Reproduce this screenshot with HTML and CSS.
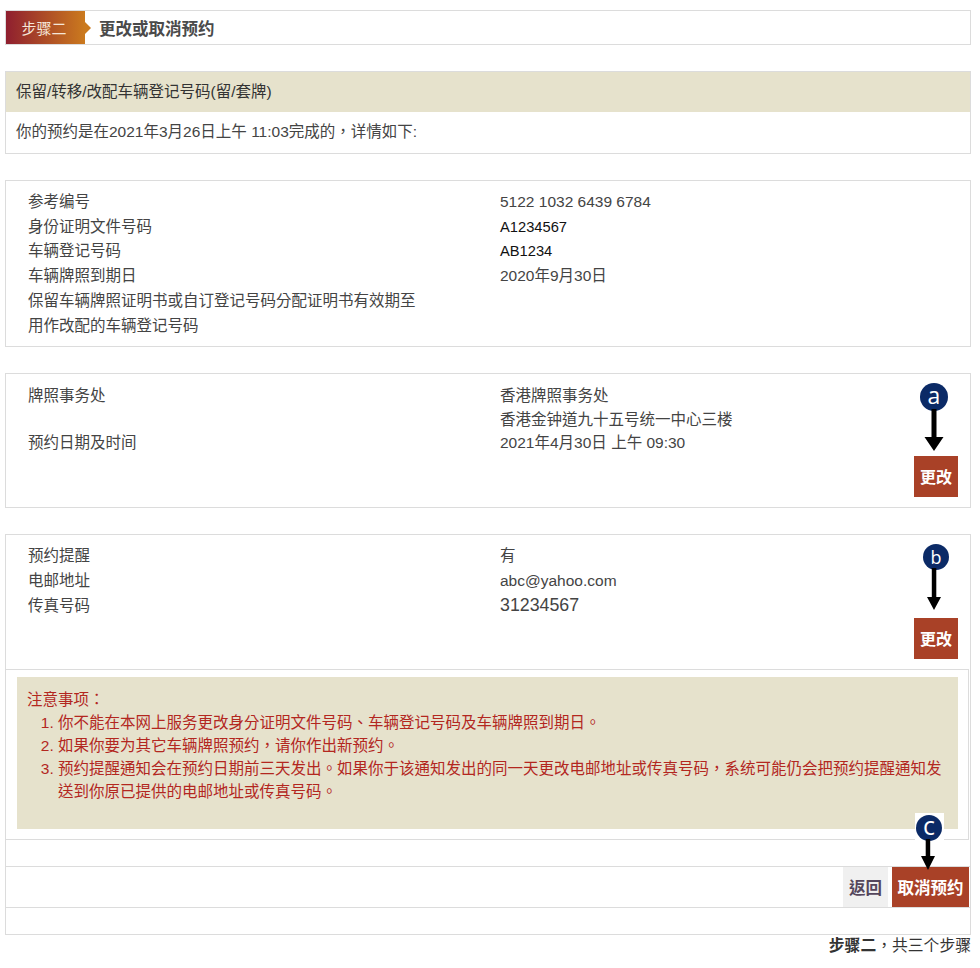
FILE: index.html
```html
<!DOCTYPE html>
<html lang="zh-TW">
<head>
<meta charset="utf-8">
<title>更改或取消预约</title>
<link rel="stylesheet" href="styles.css">
</head>
<body>
<main class="page">
  <header class="step">
    <div class="step-badge">步骤二</div>
    <h1 class="step-title">更改或取消预约</h1>
  </header>

  <section class="card intro">
    <h2 class="intro-head">保留/转移/改配车辆登记号码(留/套牌)</h2>
    <p class="intro-body">你的预约是在2021年3月26日上午 11:03完成的，详情如下:</p>
  </section>

  <section class="card">
    <dl class="info info-ref">
      <dt>参考编号</dt><dd>5122 1032 6439 6784</dd>
      <dt>身份证明文件号码</dt><dd class="strong">A1234567</dd>
      <dt>车辆登记号码</dt><dd class="strong">AB1234</dd>
      <dt>车辆牌照到期日</dt><dd>2020年9月30日</dd>
      <dt>保留车辆牌照证明书或自订登记号码分配证明书有效期至</dt><dd></dd>
      <dt>用作改配的车辆登记号码</dt><dd></dd>
    </dl>
  </section>

  <section class="card annotated">
    <dl class="info info-office">
      <dt>牌照事务处</dt><dd>香港牌照事务处<br>香港金钟道九十五号统一中心三楼</dd>
      <dt>预约日期及时间</dt><dd>2021年4月30日 上午 09:30</dd>
    </dl>
    <div class="change-row change-row-a"><button class="btn btn-change">更改</button></div>
    <svg class="mark mark-a" width="28" height="68" viewBox="0 0 28 68" aria-hidden="true">
      <circle cx="14" cy="14" r="14" fill="#0b2a66"/>
      <text class="mark-letter mark-letter-a" x="14" y="20.500" text-anchor="middle">a</text>
      <path d="M11.500 26h5v28h7L14 68 4.500 54h7z" fill="#000"/>
    </svg>
  </section>

  <section class="card annotated">
    <dl class="info info-contact">
      <dt>预约提醒</dt><dd>有</dd>
      <dt>电邮地址</dt><dd>abc@yahoo.com</dd>
      <dt>传真号码</dt><dd class="fax">31234567</dd>
    </dl>
    <div class="change-row change-row-b"><button class="btn btn-change">更改</button></div>
    <div class="notice-frame">
      <div class="notice">
        <p class="notice-head">注意事项：</p>
        <ol class="notice-list">
          <li>你不能在本网上服务更改身分证明文件号码、车辆登记号码及车辆牌照到期日。</li>
          <li>如果你要为其它车辆牌照预约，请你作出新预约。</li>
          <li>预约提醒通知会在预约日期前三天发出。如果你于该通知发出的同一天更改电邮地址或传真号码，系统可能仍会把预约提醒通知发送到你原已提供的电邮地址或传真号码。</li>
        </ol>
      </div>
    </div>
    <div class="actions">
      <button class="btn btn-back">返回</button>
      <button class="btn btn-cancel">取消预约</button>
    </div>
    <svg class="mark mark-b" width="28" height="66" viewBox="0 0 28 66" aria-hidden="true">
      <circle cx="14" cy="13" r="13" fill="#0b2a66"/>
      <text class="mark-letter mark-letter-b" x="14" y="19.500" text-anchor="middle">b</text>
      <path d="M9.800 24h4.500v29H19L12 66 5 53h4.800z" fill="#000"/>
    </svg>
    <svg class="mark mark-c" width="29" height="57" viewBox="0 0 29 57" aria-hidden="true">
      <rect width="29" height="28" fill="#fff"/>
      <circle cx="14" cy="15" r="13" fill="#0b2a66"/>
      <text class="mark-letter mark-letter-c" x="14" y="22" text-anchor="middle">c</text>
      <path d="M10.700 26h4.500v17H20L13 57 6 43h4.700z" fill="#000"/>
    </svg>
  </section>

  <p class="step-count"><b>步骤二</b>，共三个步骤</p>
</main>
</body>
</html>
```

FILE: styles.css
```css
* { box-sizing: border-box; }

html, body { margin: 0; padding: 0; background: #fff; }

body {
  font-family: "Liberation Sans", "Noto Sans CJK TC", sans-serif;
  font-size: 15.5px;
  color: #444;
}

.page {
  width: 966px;
  margin-left: 5px;
  padding-top: 10px;
}

.step {
  display: flex;
  align-items: stretch;
  height: 35px;
  border: 1px solid #dcdcdc;
}

.step-badge {
  position: relative;
  width: 79px;
  display: flex;
  align-items: center;
  justify-content: center;
  padding-right: 3px;
  background: linear-gradient(90deg, #8f1f2f, #cb7a1e);
  color: #f5e6d8;
  font-size: 15px;
}

.step-badge::after {
  content: "";
  position: absolute;
  left: 100%;
  top: 11px;
  border-left: 6px solid #cb7a1e;
  border-top: 6px solid transparent;
  border-bottom: 6px solid transparent;
}

.step-title {
  margin: 0 0 0 14px;
  align-self: center;
  font-size: 16.500px;
  font-weight: 700;
  color: #4a4a4a;
}

.card {
  margin-top: 26px;
  border: 1px solid #dcdcdc;
}

.annotated { position: relative; }

.intro-head {
  margin: 0;
  height: 40px;
  padding-left: 10px;
  background: #e6e2cc;
  font-size: 15.5px;
  font-weight: 400;
  line-height: 40px;
  color: #333;
}

.intro-body {
  margin: 0;
  height: 41px;
  padding-left: 10px;
  line-height: 40px;
  color: #444;
}

.info {
  display: grid;
  grid-template-columns: 472px 1fr;
  margin: 0;
  padding: 8px 0 0 22px;
}

.info dt, .info dd { margin: 0; }

.info-ref { padding-top: 9px; padding-bottom: 8px; line-height: 24.700px; }
.info-office { line-height: 23.500px; padding-top: 10px; }
.info-contact { line-height: 25px; }

.strong { color: #111; font-size: 14.700px; }
.fax { font-size: 17.800px; }

.change-row {
  display: flex;
  justify-content: flex-end;
  padding-right: 12px;
}

.change-row-a { padding-top: 1px; padding-bottom: 10px; }
.change-row-b { padding-top: 0; padding-bottom: 10px; }

.btn {
  margin: 0;
  padding: 0;
  border: 0;
  font-family: inherit;
  font-size: 16.500px;
  font-weight: 700;
}

.btn-change {
  width: 44px;
  height: 41px;
  background: #a94127;
  color: #fff;
  font-size: 16px;
}

.notice-frame {
  margin-right: 1px;
  padding: 7px 10px 10px 11px;
  border-top: 1px solid #dcdcdc;
  border-right: 1px solid #dcdcdc;
  border-bottom: 1px solid #dcdcdc;
}

.notice {
  height: 152px;
  padding: 11px 10px 0;
  background: #e6e2cc;
  color: #b3271f;
  line-height: 23px;
}

.notice-head { margin: 0; }

.notice-list {
  margin: 0;
  padding: 0 4px 0 31px;
}

.actions {
  display: flex;
  justify-content: flex-end;
  gap: 4px;
  height: 42px;
  margin-top: 26px;
  margin-bottom: 26px;
  padding-right: 1px;
  border-top: 1px solid #dcdcdc;
  border-bottom: 1px solid #dcdcdc;
}

.btn-back {
  width: 45px;
  background: #f0f0f0;
  color: #54465c;
}

.btn-cancel {
  width: 77px;
  background: #a94127;
  color: #fff;
}

.mark { position: absolute; overflow: visible; }
.mark-a { top: 9px; right: 22px; }
.mark-b { top: 9px; right: 20px; }
.mark-c { top: 278px; right: 26px; }

.mark-letter {
  font-family: "Open Sans", sans-serif;
  fill: #fff;
}

.mark-letter-a { font-size: 23px; }
.mark-letter-b { font-size: 18px; }
.mark-letter-c { font-size: 25px; }

.step-count {
  margin: 1px 0 0;
  text-align: right;
  font-size: 15.800px;
  line-height: 20px;
  color: #333;
}
```
